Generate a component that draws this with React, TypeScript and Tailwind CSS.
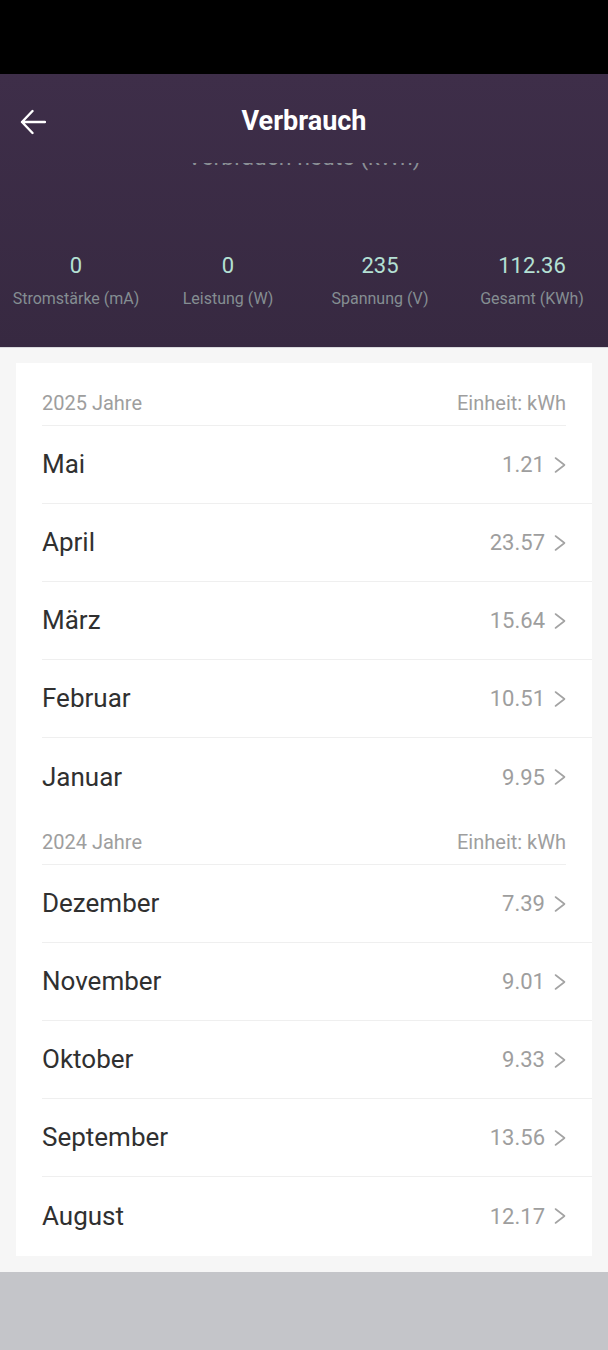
import React from "react";

type Month = { name: string; value: string };

const years: { label: string; months: Month[] }[] = [
  {
    label: "2025 Jahre",
    months: [
      { name: "Mai", value: "1.21" },
      { name: "April", value: "23.57" },
      { name: "März", value: "15.64" },
      { name: "Februar", value: "10.51" },
      { name: "Januar", value: "9.95" },
    ],
  },
  {
    label: "2024 Jahre",
    months: [
      { name: "Dezember", value: "7.39" },
      { name: "November", value: "9.01" },
      { name: "Oktober", value: "9.33" },
      { name: "September", value: "13.56" },
      { name: "August", value: "12.17" },
    ],
  },
];

const stats = [
  { value: "0", label: "Stromstärke (mA)" },
  { value: "0", label: "Leistung (W)" },
  { value: "235", label: "Spannung (V)" },
  { value: "112.36", label: "Gesamt (KWh)" },
];

function Chevron() {
  return (
    <svg width="12" height="18" viewBox="0 0 12 18" fill="none" className="shrink-0">
      <path d="M1.5 2 L10.5 9 L1.5 16" stroke="#a3a3a3" strokeWidth="1.6" strokeLinecap="round" strokeLinejoin="round" />
    </svg>
  );
}

export default function App() {
  return (
    <div className="w-[608px] h-[1350px] flex flex-col overflow-hidden font-['Roboto',sans-serif]">
      {/* status bar */}
      <div className="h-[74px] bg-black shrink-0" />

      {/* header */}
      <div className="h-[274px] shrink-0 flex flex-col bg-gradient-to-b from-[#3e2e49] to-[#372941] border-b border-[#d9d9dd]">
        <div className="h-[89px] pt-[6px] flex items-center">
          <div className="w-[100px] pl-[20px] flex items-center">
            <svg width="26" height="26" viewBox="0 0 26 26" fill="none">
              <path d="M12.5 2 L2 13 L12.5 24 M2 13 H25" stroke="#ffffff" strokeWidth="2.4" strokeLinecap="round" strokeLinejoin="round" />
            </svg>
          </div>
          <div className="flex-1 text-center text-white text-[27px] font-bold leading-none">Verbrauch</div>
          <div className="w-[100px]" />
        </div>

        {/* scrolled-away chart title, mostly hidden under the bar */}
        <div className="h-[10px] overflow-hidden">
          <div className="-mt-[19px] text-center text-[23px] leading-[28px] text-[#8b9096] whitespace-nowrap">Verbrauch heute (kWh)</div>
        </div>

        <div className="mt-[79px] grid grid-cols-4">
          {stats.map((s) => (
            <div key={s.label} className="flex flex-col items-center">
              <div className="text-[22px] leading-[28px] text-[#b4e0d4]">{s.value}</div>
              <div className="mt-[9px] text-[16px] leading-[20px] text-[#858e92] whitespace-nowrap">{s.label}</div>
            </div>
          ))}
        </div>
      </div>

      {/* list */}
      <div className="bg-[#f6f6f6] px-4 pt-[15px] pb-4 shrink-0">
        <div className="bg-white pt-[14px] pb-px pl-[26px]">
          {years.map((y) => (
            <div key={y.label}>
              <div className="h-[49px] mr-[26px] flex items-end justify-between pb-[10px] border-b border-[#efefef] text-[20px] leading-[24px] text-[#9e9e9e]">
                <span>{y.label}</span>
                <span>Einheit: kWh</span>
              </div>
              {y.months.map((m, i) => (
                <div
                  key={m.name}
                  className={`h-[78px] pr-[26px] flex items-center justify-between ${
                    i < y.months.length - 1 ? "border-b border-[#efefef]" : ""
                  }`}
                >
                  <span className="text-[26px] text-[#303030]">{m.name}</span>
                  <span className="flex items-center gap-[9px]">
                    <span className="text-[22px] text-[#9e9e9e]">{m.value}</span>
                    <Chevron />
                  </span>
                </div>
              ))}
            </div>
          ))}
        </div>
      </div>

      {/* bottom area */}
      <div className="flex-1 bg-[#c4c5c9]" />
    </div>
  );
}
